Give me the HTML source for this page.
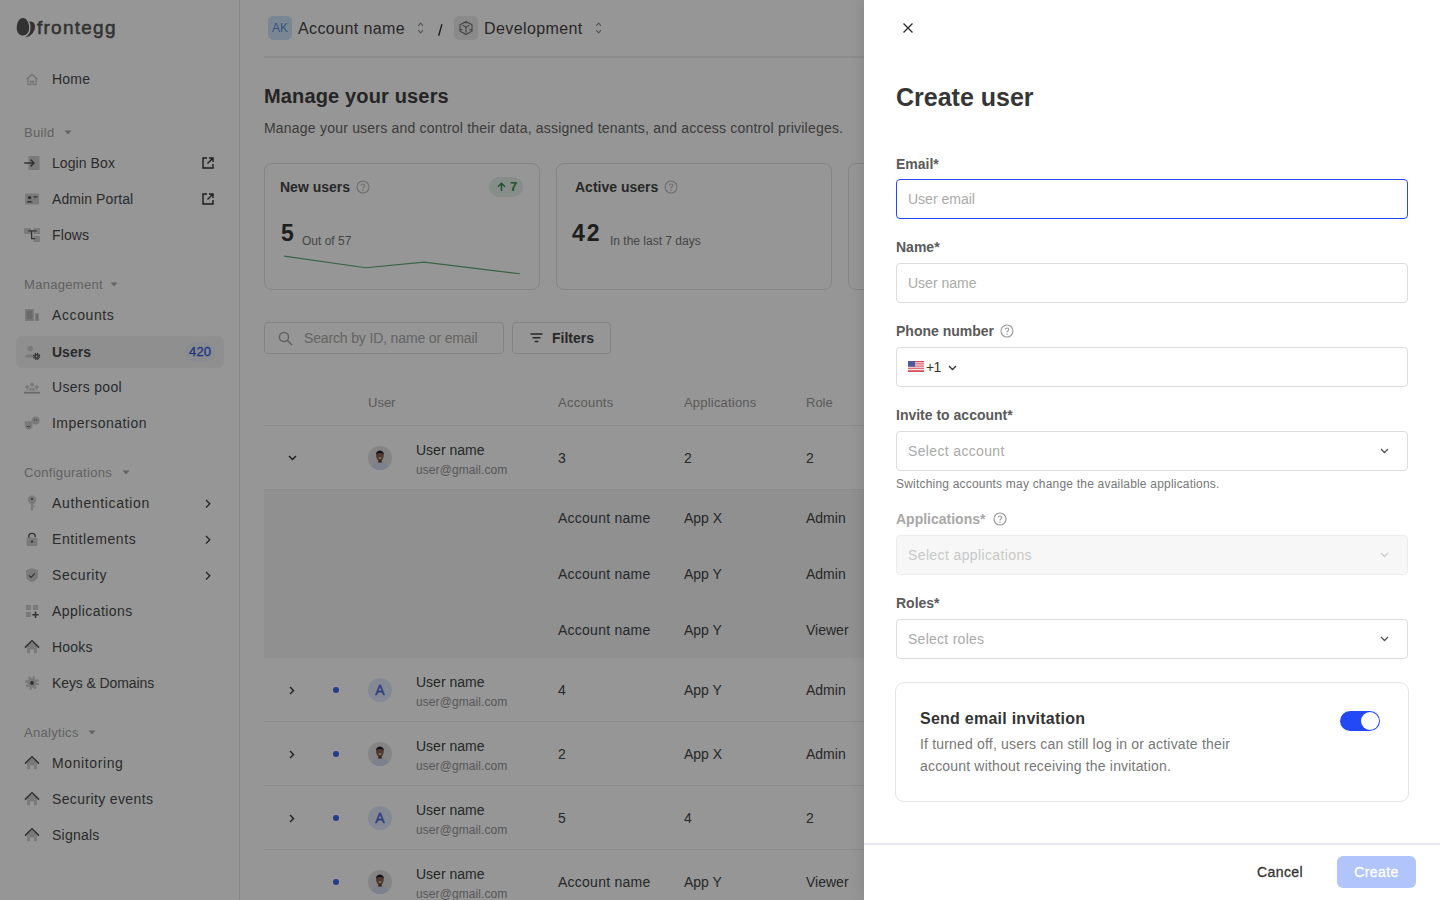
<!DOCTYPE html><html><head><meta charset="utf-8"><title>Create user</title><style>
*{box-sizing:border-box;margin:0;padding:0}
html,body{width:1440px;height:900px;overflow:hidden;background:#fff}
body{font-family:"Liberation Sans",sans-serif;color:#333;position:relative}
.a{position:absolute}
.t{position:absolute;white-space:nowrap;line-height:20px;height:20px}
.b{font-weight:700}
#side{position:absolute;left:0;top:0;width:240px;height:900px;background:#fff;border-right:1px solid #e6e6e6}
#main{position:absolute;left:240px;top:0;width:1200px;height:900px;background:#fff}
#ov{position:absolute;left:0;top:0;width:1440px;height:900px;background:rgba(0,0,0,0.41)}
#drawer{position:absolute;left:864px;top:0;width:576px;height:900px;background:#fff;box-shadow:-3px 0 12px rgba(0,0,0,0.09)}
.nav{color:#4a4a4a;font-size:14px;letter-spacing:0.35px}
.sec{color:#a6a6a6;font-size:13px;letter-spacing:0.3px}
svg{position:absolute;overflow:visible}
.lbl{color:#5a5a5a;font-size:14px;font-weight:700}
.inp{position:absolute;left:32px;width:512px;height:40px;border:1px solid #dcdcdc;border-radius:4px;background:#fff}
.ph{color:#aaa;font-size:14px}
.th{color:#999;font-size:13px}
.td{color:#444;font-size:14px}
</style></head><body>
<div id="side">
<svg style="left:14px;top:16px" width="24" height="24" viewBox="0 0 24 24">
<path d="M8.9 2 C12.6 2 15.1 6.8 15.1 12 C15.1 16.3 12.5 19.5 8.9 19.5 C5.3 19.5 2.7 16.3 2.7 12.2 C2.7 6.8 5.2 2 8.9 2Z" fill="#555"/>
<path d="M15.2 5.6 C18.8 5.2 21.2 7.5 21 11 C20.7 16 17 20.6 11.2 21.4 C14.8 19.2 16.6 15.8 16.6 11.5 C16.6 9 16.1 7.1 15.2 5.6Z" fill="#555"/>
</svg>
<div class="t" style="left:37px;top:17px;font-size:19px;line-height:22px;height:22px;letter-spacing:1.25px;color:#555;-webkit-text-stroke:0.5px #555">frontegg</div>
<svg style="left:24px;top:71px" width="16" height="16" viewBox="0 0 16 16"><path d="M2.6 8.2 L8 3.4 L13.4 8.2 M4 7.2 V13.6 H6.7 V10.3 H9.3 V13.6 H12 V7.2" fill="none" stroke="#c9c9c9" stroke-width="1.5" stroke-linejoin="round"/></svg>
<div class="t nav" style="left:52px;top:69px;letter-spacing:0.23px">Home</div>
<div class="t sec" style="left:24px;top:123px">Build</div>
<svg style="left:64px;top:130px" width="8" height="5" viewBox="0 0 8 5"><path d="M0.5 0.5 H7.5 L4 4.5Z" fill="#a8a8a8"/></svg>
<svg style="left:24px;top:155px" width="16" height="16" viewBox="0 0 16 16"><rect x="4.4" y="1" width="11.2" height="14" rx="1" fill="#d0d0d0"/><path d="M0.2 8 H9.8 M6.6 4.6 L10 8 L6.6 11.4" fill="none" stroke="#555" stroke-width="1.5"/></svg>
<div class="t nav" style="left:52px;top:153px;letter-spacing:0.08px">Login Box</div>
<svg style="left:202px;top:157px" width="12" height="12" viewBox="0 0 12 12"><path d="M5 1 H1 V11 H11 V7 M7 1 H11 V5 M11 1 L5.5 6.5" fill="none" stroke="#333" stroke-width="1.4"/></svg>
<svg style="left:24px;top:191px" width="16" height="16" viewBox="0 0 16 16"><rect x="1" y="2.6" width="14" height="11" rx="1" fill="#d0d0d0"/><circle cx="5.6" cy="6.6" r="1.7" fill="#555"/><path d="M2.4 11.6 C2.6 9.4 8.6 9.4 8.8 11.6Z" fill="#555"/><rect x="9.6" y="5.2" width="3.8" height="1.3" fill="#555"/><rect x="9.6" y="7.4" width="2.6" height="1.1" fill="#c4c4c4"/></svg>
<div class="t nav" style="left:52px;top:189px;letter-spacing:0.09px">Admin Portal</div>
<svg style="left:202px;top:193px" width="12" height="12" viewBox="0 0 12 12"><path d="M5 1 H1 V11 H11 V7 M7 1 H11 V5 M11 1 L5.5 6.5" fill="none" stroke="#333" stroke-width="1.4"/></svg>
<svg style="left:24px;top:227px" width="16" height="16" viewBox="0 0 16 16"><rect x="0" y="1" width="7" height="6" fill="#d0d0d0"/><rect x="9.5" y="1" width="6.5" height="6" fill="#d0d0d0"/><rect x="9.5" y="9" width="6.5" height="6" fill="#d0d0d0"/><path d="M4.2 3.8 H12.6 M7.6 3.8 V11.6 H11" fill="none" stroke="#555" stroke-width="1.3"/></svg>
<div class="t nav" style="left:52px;top:225px;letter-spacing:0.12px">Flows</div>
<div class="t sec" style="left:24px;top:275px">Management</div>
<svg style="left:110px;top:282px" width="8" height="5" viewBox="0 0 8 5"><path d="M0.5 0.5 H7.5 L4 4.5Z" fill="#a8a8a8"/></svg>
<svg style="left:24px;top:307px" width="16" height="16" viewBox="0 0 16 16"><rect x="1" y="2" width="9" height="12" fill="#d0d0d0"/><rect x="2.6" y="3.6" width="5.8" height="8.8" fill="#b4b4b4"/><rect x="11" y="6" width="4" height="8" fill="#d0d0d0"/><rect x="12.2" y="7.6" width="1.6" height="5" fill="#b4b4b4"/></svg>
<div class="t nav" style="left:52px;top:305px;letter-spacing:0.6px">Accounts</div>
<div class="a" style="left:16px;top:336px;width:208px;height:32px;border-radius:6px;background:#f3f3f3"></div>
<svg style="left:24px;top:344px" width="16" height="16" viewBox="0 0 16 16"><circle cx="6.2" cy="4.6" r="2.9" fill="#d0d0d0"/><path d="M0.8 13.6 C0.8 9 11.6 9 11.6 13.6Z" fill="#d0d0d0"/><circle cx="12.6" cy="12.4" r="2.9" fill="none" stroke="#555" stroke-width="1.4" stroke-dasharray="1.4 0.88"/><circle cx="12.6" cy="12.4" r="2.4" fill="#555"/><circle cx="12.6" cy="12.4" r="0.9" fill="#f3f3f3"/></svg>
<div class="t nav b" style="left:52px;top:342px;letter-spacing:0px">Users</div>
<div class="a" style="left:185px;top:342px;width:30px;height:20px;border-radius:10px;background:#eceef8"></div>
<div class="t" style="left:189px;top:342px;font-size:13px;color:#3558e0;letter-spacing:0.2px;-webkit-text-stroke:0.3px #3558e0">420</div>
<svg style="left:24px;top:379px" width="16" height="16" viewBox="0 0 16 16"><circle cx="8" cy="5.6" r="2.1" fill="#d0d0d0"/><path d="M4.6 11.6 C4.6 7.8 11.4 7.8 11.4 11.6Z" fill="#d0d0d0"/><path d="M3.2 6.5 V11.5 M1.2 8.5 L3.2 6.5 L5.2 8.5 M12.8 6.5 V11.5 M10.8 8.5 L12.8 6.5 L14.8 8.5" fill="none" stroke="#d0d0d0" stroke-width="1.2"/><rect x="0" y="12.8" width="16" height="1.8" fill="#b6b6b6"/></svg>
<div class="t nav" style="left:52px;top:377px;letter-spacing:0.3px">Users pool</div>
<svg style="left:24px;top:415px" width="16" height="16" viewBox="0 0 16 16"><path d="M0.8 6.2 H8.4 V10.4 C8.4 13 6.6 14.6 4.6 14.6 C2.6 14.6 0.8 13 0.8 10.4Z" fill="#d0d0d0"/><circle cx="11.6" cy="5.4" r="4" fill="#d0d0d0"/><path d="M10 5 H11.2 M12.2 5 H13.4" stroke="#555" stroke-width="1"/><path d="M2.8 10.8 C3.6 12.2 5.6 12.2 6.4 10.8" stroke="#555" stroke-width="1" fill="none"/></svg>
<div class="t nav" style="left:52px;top:413px;letter-spacing:0.48px">Impersonation</div>
<div class="t sec" style="left:24px;top:463px">Configurations</div>
<svg style="left:122px;top:470px" width="8" height="5" viewBox="0 0 8 5"><path d="M0.5 0.5 H7.5 L4 4.5Z" fill="#a8a8a8"/></svg>
<svg style="left:24px;top:495px" width="16" height="16" viewBox="0 0 16 16"><circle cx="8" cy="4.8" r="4.2" fill="#d0d0d0"/><rect x="6.8" y="7" width="2.4" height="8.4" rx="1" fill="#d0d0d0"/><rect x="8.6" y="10.4" width="2" height="1.6" fill="#d0d0d0"/><circle cx="8" cy="3.9" r="1" fill="#555"/></svg>
<div class="t nav" style="left:52px;top:493px;letter-spacing:0.65px">Authentication</div>
<svg style="left:205px;top:499px" width="6" height="10" viewBox="0 0 6 10"><path d="M1 1 L4.8 4.8 L1 8.6" fill="none" stroke="#3a3a3a" stroke-width="1.3"/></svg>
<svg style="left:24px;top:531px" width="16" height="16" viewBox="0 0 16 16"><path d="M4.9 7 V4.6 C4.9 1.6 11.1 1.6 11.1 4.6 V6" fill="none" stroke="#555" stroke-width="1.4"/><rect x="2.6" y="6.4" width="10.8" height="8.6" rx="1.2" fill="#d0d0d0"/><circle cx="8" cy="10.7" r="1.1" fill="#555"/></svg>
<div class="t nav" style="left:52px;top:529px;letter-spacing:0.61px">Entitlements</div>
<svg style="left:205px;top:535px" width="6" height="10" viewBox="0 0 6 10"><path d="M1 1 L4.8 4.8 L1 8.6" fill="none" stroke="#3a3a3a" stroke-width="1.3"/></svg>
<svg style="left:24px;top:567px" width="16" height="16" viewBox="0 0 16 16"><path d="M8 1 L14 3.2 V8.4 C14 11.8 11.2 14.2 8 15.2 C4.8 14.2 2 11.8 2 8.4 V3.2Z" fill="#d0d0d0"/><path d="M5 8.4 L7 10.4 L11 6.4" fill="none" stroke="#555" stroke-width="1.3"/></svg>
<div class="t nav" style="left:52px;top:565px;letter-spacing:0.56px">Security</div>
<svg style="left:205px;top:571px" width="6" height="10" viewBox="0 0 6 10"><path d="M1 1 L4.8 4.8 L1 8.6" fill="none" stroke="#3a3a3a" stroke-width="1.3"/></svg>
<svg style="left:24px;top:603px" width="16" height="16" viewBox="0 0 16 16"><rect x="2" y="2" width="5" height="5" fill="#d0d0d0"/><rect x="9" y="2" width="5" height="5" fill="#d0d0d0"/><rect x="2" y="9" width="5" height="5" fill="#d0d0d0"/><path d="M11.5 8.6 V15 M8.3 11.8 H14.7" stroke="#555" stroke-width="1.5"/></svg>
<div class="t nav" style="left:52px;top:601px;letter-spacing:0.43px">Applications</div>
<svg style="left:24px;top:639px" width="16" height="16" viewBox="0 0 16 16"><path d="M3.2 7.2 L8 3.2 L12.8 7.2 V14.2 H10 V10.6 H6 V14.2 H3.2Z" fill="#d0d0d0"/><path d="M1 8.6 L8 1.8 L15 8.6" fill="none" stroke="#555" stroke-width="1.6" stroke-linejoin="round"/></svg>
<div class="t nav" style="left:52px;top:637px;letter-spacing:0.18px">Hooks</div>
<svg style="left:24px;top:675px" width="16" height="16" viewBox="0 0 16 16"><circle cx="8" cy="8" r="5.6" fill="none" stroke="#d0d0d0" stroke-width="2.8" stroke-dasharray="2.2 2.2"/><circle cx="8" cy="8" r="5" fill="#d0d0d0"/><circle cx="8" cy="8" r="1.9" fill="#555"/></svg>
<div class="t nav" style="left:52px;top:673px;letter-spacing:-0.1px">Keys &amp; Domains</div>
<div class="t sec" style="left:24px;top:723px">Analytics</div>
<svg style="left:88px;top:730px" width="8" height="5" viewBox="0 0 8 5"><path d="M0.5 0.5 H7.5 L4 4.5Z" fill="#a8a8a8"/></svg>
<svg style="left:24px;top:755px" width="16" height="16" viewBox="0 0 16 16"><path d="M3.2 7.2 L8 3.2 L12.8 7.2 V14.2 H10 V10.6 H6 V14.2 H3.2Z" fill="#d0d0d0"/><path d="M1 8.6 L8 1.8 L15 8.6" fill="none" stroke="#555" stroke-width="1.6" stroke-linejoin="round"/></svg>
<div class="t nav" style="left:52px;top:753px;letter-spacing:0.61px">Monitoring</div>
<svg style="left:24px;top:791px" width="16" height="16" viewBox="0 0 16 16"><path d="M3.2 7.2 L8 3.2 L12.8 7.2 V14.2 H10 V10.6 H6 V14.2 H3.2Z" fill="#d0d0d0"/><path d="M1 8.6 L8 1.8 L15 8.6" fill="none" stroke="#555" stroke-width="1.6" stroke-linejoin="round"/></svg>
<div class="t nav" style="left:52px;top:789px;letter-spacing:0.37px">Security events</div>
<svg style="left:24px;top:827px" width="16" height="16" viewBox="0 0 16 16"><path d="M3.2 7.2 L8 3.2 L12.8 7.2 V14.2 H10 V10.6 H6 V14.2 H3.2Z" fill="#d0d0d0"/><path d="M1 8.6 L8 1.8 L15 8.6" fill="none" stroke="#555" stroke-width="1.6" stroke-linejoin="round"/></svg>
<div class="t nav" style="left:52px;top:825px;letter-spacing:0.24px">Signals</div>
</div>
<div id="main">
<div class="a" style="left:28px;top:16px;width:24px;height:24px;border-radius:5px;background:#d2e4fb"></div>
<div class="t" style="left:28px;top:18px;width:24px;text-align:center;font-size:12px;color:#5a8fd8">AK</div>
<div class="t" style="left:58px;top:19px;font-size:16px;color:#454545;letter-spacing:0.4px">Account name</div>
<svg style="left:177px;top:22px" width="7" height="12" viewBox="0 0 7 12"><path d="M1.2 3.8 L3.6 1.2 L6 3.8 M1.2 8.2 L3.6 10.8 L6 8.2" fill="none" stroke="#8f8f8f" stroke-width="1.15"/></svg>
<svg style="left:196px;top:22px" width="8" height="16" viewBox="0 0 8 16"><path d="M2.8 13.2 L5.8 2.6" stroke="#333" stroke-width="1.4" stroke-linecap="round"/></svg>
<div class="a" style="left:214px;top:16px;width:24px;height:24px;border-radius:5px;background:#eaeaea"></div>
<svg style="left:218px;top:20px" width="16" height="16" viewBox="0 0 16 16"><path d="M8 1.6 L14 4.8 V11.2 L8 14.4 L2 11.2 V4.8Z M4.6 5.2 L8 7.2 L11.4 5.2 M8 7.2 V12.6 M8 1.6 V3.4 M2.4 9.6 L4.6 9.6 M13.6 9.6 L11.4 9.6" fill="none" stroke="#7a7a7a" stroke-width="1.2" stroke-linejoin="round"/></svg>
<div class="t" style="left:244px;top:19px;font-size:16px;color:#454545;letter-spacing:0.4px">Development</div>
<svg style="left:355px;top:22px" width="7" height="12" viewBox="0 0 7 12"><path d="M1.2 3.8 L3.6 1.2 L6 3.8 M1.2 8.2 L3.6 10.8 L6 8.2" fill="none" stroke="#8f8f8f" stroke-width="1.15"/></svg>
<div class="a" style="left:24px;top:56px;width:1176px;height:2px;background:#efefef"></div>
<div class="t b" style="left:24px;top:84px;font-size:20px;line-height:24px;height:24px;color:#404040;letter-spacing:0.15px">Manage your users</div>
<div class="t" style="left:24px;top:118px;font-size:14px;color:#666;letter-spacing:0.21px">Manage your users and control their data, assigned tenants, and access control privileges.</div>
<div class="a" style="left:24px;top:163px;width:276px;height:127px;border:1px solid #e2e2e2;border-radius:8px"></div>
<div class="t b" style="left:40px;top:177px;font-size:14px;color:#454545">New users</div>
<svg style="left:116px;top:180px" width="14" height="14" viewBox="0 0 14 14"><circle cx="7" cy="7" r="6" fill="none" stroke="#bdbdbd" stroke-width="1.1"/><path d="M5.2 5.4 C5.2 3.5 8.8 3.5 8.8 5.4 C8.8 6.8 7 6.8 7 8.4" fill="none" stroke="#bdbdbd" stroke-width="1.1"/><circle cx="7" cy="10.3" r="0.7" fill="#bdbdbd"/></svg>
<div class="t b" style="left:41px;top:220px;font-size:23px;line-height:26px;height:26px;color:#333;">5</div>
<div class="t" style="left:62px;top:231px;font-size:12px;color:#777">Out of 57</div>
<div class="a" style="left:316px;top:163px;width:276px;height:127px;border:1px solid #e2e2e2;border-radius:8px"></div>
<div class="t b" style="left:335px;top:177px;font-size:14px;color:#454545">Active users</div>
<svg style="left:424px;top:180px" width="14" height="14" viewBox="0 0 14 14"><circle cx="7" cy="7" r="6" fill="none" stroke="#bdbdbd" stroke-width="1.1"/><path d="M5.2 5.4 C5.2 3.5 8.8 3.5 8.8 5.4 C8.8 6.8 7 6.8 7 8.4" fill="none" stroke="#bdbdbd" stroke-width="1.1"/><circle cx="7" cy="10.3" r="0.7" fill="#bdbdbd"/></svg>
<div class="t b" style="left:332px;top:220px;font-size:23px;line-height:26px;height:26px;color:#333;letter-spacing:2px;">42</div>
<div class="t" style="left:370px;top:231px;font-size:12px;color:#777">In the last 7 days</div>
<div class="a" style="left:608px;top:163px;width:276px;height:127px;border:1px solid #e2e2e2;border-radius:8px"></div>
<div class="a" style="left:249px;top:177px;width:34px;height:20px;border-radius:10px;background:#e6f0e8"></div>
<svg style="left:257px;top:182px" width="9" height="10" viewBox="0 0 9 10"><path d="M4.5 9 V1.5 M1 4.8 L4.5 1.3 L8 4.8" fill="none" stroke="#3d8a55" stroke-width="1.5"/></svg>
<div class="t b" style="left:270px;top:177px;font-size:13px;color:#3d8a55">7</div>
<svg style="left:0;top:0" width="400" height="300"><polyline points="44.2,256.1 125.7,267.7 184.1,262.1 279.8,273.8" fill="none" stroke="#62a876" stroke-width="1.1"/></svg>
<div class="a" style="left:24px;top:322px;width:240px;height:32px;border:1px solid #e0e0e0;border-radius:4px"></div>
<svg style="left:38px;top:331px" width="15" height="15" viewBox="0 0 15 15"><circle cx="6" cy="6" r="4.6" fill="none" stroke="#a6a6a6" stroke-width="1.5"/><path d="M9.5 9.5 L14 14" stroke="#a6a6a6" stroke-width="1.6"/></svg>
<div class="t" style="left:64px;top:328px;font-size:14px;color:#aaa;letter-spacing:-0.15px">Search by ID, name or email</div>
<div class="a" style="left:272px;top:322px;width:99px;height:32px;border:1px solid #e0e0e0;border-radius:4px"></div>
<svg style="left:290px;top:333px" width="13" height="10" viewBox="0 0 13 10"><path d="M0.5 1 H12.5 M2.5 4.8 H10.5 M4.7 8.6 H8.3" stroke="#444" stroke-width="1.5"/></svg>
<div class="t b" style="left:312px;top:328px;font-size:14px;color:#454545">Filters</div>
<div class="t th" style="left:128px;top:393px">User</div>
<div class="t th" style="left:318px;top:393px;letter-spacing:0.25px">Accounts</div>
<div class="t th" style="left:444px;top:393px;letter-spacing:0.2px">Applications</div>
<div class="t th" style="left:566px;top:393px">Role</div>
<div class="a" style="left:24px;top:425px;width:1176px;height:1px;background:#ededed"></div>
<svg style="left:48px;top:455px" width="9" height="6" viewBox="0 0 9 6"><path d="M1 1 L4.5 4.5 L8 1" fill="none" stroke="#333" stroke-width="1.4"/></svg>
<svg style="left:128px;top:446px" width="24" height="24" viewBox="0 0 24 24"><defs><clipPath id="c458"><circle cx="12" cy="12" r="12"/></clipPath></defs><g clip-path="url(#c458)"><rect width="24" height="24" fill="#e2e2e2"/><path d="M2.5 24 C3 18.5 7 15.3 12 15.3 C17 15.3 21 18.5 21.5 24Z" fill="#d2deec"/><rect x="10.2" y="12.5" width="3.6" height="4" fill="#5e3f2c"/><ellipse cx="11.9" cy="9.6" rx="3.8" ry="5.1" fill="#86604a"/><path d="M7.9 8.6 C7.6 3.6 16.2 3.4 15.9 8.6 C15.2 6.4 8.7 6.4 7.9 8.6Z" fill="#1e1e1e"/><ellipse cx="11.9" cy="12" rx="1.6" ry="0.8" fill="#e8e0da"/></g></svg>
<div class="t td" style="left:176px;top:440px">User name</div><div class="t" style="left:176px;top:460px;font-size:12px;color:#959595;letter-spacing:0.08px">user@gmail.com</div>
<div class="t td" style="left:318px;top:448px">3</div>
<div class="t td" style="left:444px;top:448px">2</div>
<div class="t td" style="left:566px;top:448px">2</div>
<div class="a" style="left:24px;top:489px;width:1176px;height:1px;background:#ededed"></div>
<div class="a" style="left:24px;top:490px;width:1176px;height:168px;background:#f5f5f5"></div>
<div class="t td" style="left:318px;top:508px;letter-spacing:0.25px">Account name</div>
<div class="t td" style="left:444px;top:508px">App X</div>
<div class="t td" style="left:566px;top:508px">Admin</div>
<div class="t td" style="left:318px;top:564px;letter-spacing:0.25px">Account name</div>
<div class="t td" style="left:444px;top:564px">App Y</div>
<div class="t td" style="left:566px;top:564px">Admin</div>
<div class="t td" style="left:318px;top:620px;letter-spacing:0.25px">Account name</div>
<div class="t td" style="left:444px;top:620px">App Y</div>
<div class="t td" style="left:566px;top:620px">Viewer</div>
<div class="a" style="left:24px;top:721px;width:1176px;height:1px;background:#ededed"></div>
<svg style="left:49px;top:685.5px" width="6" height="9" viewBox="0 0 6 9"><path d="M1 1 L4.5 4.5 L1 8" fill="none" stroke="#333" stroke-width="1.4"/></svg>
<div class="a" style="left:93px;top:687px;width:6px;height:6px;border-radius:3px;background:#4565f0"></div>
<div class="a" style="left:128px;top:678px;width:24px;height:24px;border-radius:12px;background:#e1e9fa"></div><div class="t" style="left:128px;top:680px;width:24px;text-align:center;font-size:14px;color:#4a6ad8;-webkit-text-stroke:0.4px #4a6ad8">A</div>
<div class="t td" style="left:176px;top:672px">User name</div><div class="t" style="left:176px;top:692px;font-size:12px;color:#959595;letter-spacing:0.08px">user@gmail.com</div>
<div class="t td" style="left:318px;top:680px;">4</div>
<div class="t td" style="left:444px;top:680px">App Y</div>
<div class="t td" style="left:566px;top:680px">Admin</div>
<div class="a" style="left:24px;top:785px;width:1176px;height:1px;background:#ededed"></div>
<svg style="left:49px;top:749.5px" width="6" height="9" viewBox="0 0 6 9"><path d="M1 1 L4.5 4.5 L1 8" fill="none" stroke="#333" stroke-width="1.4"/></svg>
<div class="a" style="left:93px;top:751px;width:6px;height:6px;border-radius:3px;background:#4565f0"></div>
<svg style="left:128px;top:742px" width="24" height="24" viewBox="0 0 24 24"><defs><clipPath id="c754"><circle cx="12" cy="12" r="12"/></clipPath></defs><g clip-path="url(#c754)"><rect width="24" height="24" fill="#e2e2e2"/><path d="M2.5 24 C3 18.5 7 15.3 12 15.3 C17 15.3 21 18.5 21.5 24Z" fill="#d2deec"/><rect x="10.2" y="12.5" width="3.6" height="4" fill="#5e3f2c"/><ellipse cx="11.9" cy="9.6" rx="3.8" ry="5.1" fill="#86604a"/><path d="M7.9 8.6 C7.6 3.6 16.2 3.4 15.9 8.6 C15.2 6.4 8.7 6.4 7.9 8.6Z" fill="#1e1e1e"/><ellipse cx="11.9" cy="12" rx="1.6" ry="0.8" fill="#e8e0da"/></g></svg>
<div class="t td" style="left:176px;top:736px">User name</div><div class="t" style="left:176px;top:756px;font-size:12px;color:#959595;letter-spacing:0.08px">user@gmail.com</div>
<div class="t td" style="left:318px;top:744px;">2</div>
<div class="t td" style="left:444px;top:744px">App X</div>
<div class="t td" style="left:566px;top:744px">Admin</div>
<div class="a" style="left:24px;top:849px;width:1176px;height:1px;background:#ededed"></div>
<svg style="left:49px;top:813.5px" width="6" height="9" viewBox="0 0 6 9"><path d="M1 1 L4.5 4.5 L1 8" fill="none" stroke="#333" stroke-width="1.4"/></svg>
<div class="a" style="left:93px;top:815px;width:6px;height:6px;border-radius:3px;background:#4565f0"></div>
<div class="a" style="left:128px;top:806px;width:24px;height:24px;border-radius:12px;background:#e1e9fa"></div><div class="t" style="left:128px;top:808px;width:24px;text-align:center;font-size:14px;color:#4a6ad8;-webkit-text-stroke:0.4px #4a6ad8">A</div>
<div class="t td" style="left:176px;top:800px">User name</div><div class="t" style="left:176px;top:820px;font-size:12px;color:#959595;letter-spacing:0.08px">user@gmail.com</div>
<div class="t td" style="left:318px;top:808px;">5</div>
<div class="t td" style="left:444px;top:808px">4</div>
<div class="t td" style="left:566px;top:808px">2</div>
<div class="a" style="left:24px;top:913px;width:1176px;height:1px;background:#ededed"></div>
<div class="a" style="left:93px;top:879px;width:6px;height:6px;border-radius:3px;background:#4565f0"></div>
<svg style="left:128px;top:870px" width="24" height="24" viewBox="0 0 24 24"><defs><clipPath id="c882"><circle cx="12" cy="12" r="12"/></clipPath></defs><g clip-path="url(#c882)"><rect width="24" height="24" fill="#e2e2e2"/><path d="M2.5 24 C3 18.5 7 15.3 12 15.3 C17 15.3 21 18.5 21.5 24Z" fill="#d2deec"/><rect x="10.2" y="12.5" width="3.6" height="4" fill="#5e3f2c"/><ellipse cx="11.9" cy="9.6" rx="3.8" ry="5.1" fill="#86604a"/><path d="M7.9 8.6 C7.6 3.6 16.2 3.4 15.9 8.6 C15.2 6.4 8.7 6.4 7.9 8.6Z" fill="#1e1e1e"/><ellipse cx="11.9" cy="12" rx="1.6" ry="0.8" fill="#e8e0da"/></g></svg>
<div class="t td" style="left:176px;top:864px">User name</div><div class="t" style="left:176px;top:884px;font-size:12px;color:#959595;letter-spacing:0.08px">user@gmail.com</div>
<div class="t td" style="left:318px;top:872px;letter-spacing:0.25px;">Account name</div>
<div class="t td" style="left:444px;top:872px">App Y</div>
<div class="t td" style="left:566px;top:872px">Viewer</div>
</div>
<div id="ov"></div>
<div id="drawer">
<svg style="left:39px;top:23px" width="10" height="10" viewBox="0 0 10 10"><path d="M0.5 0.5 L9.5 9.5 M9.5 0.5 L0.5 9.5" stroke="#2f2f2f" stroke-width="1.4"/></svg>
<div class="t b" style="left:32px;top:83px;font-size:25px;line-height:28px;height:28px;color:#363636">Create user</div>
<div class="t lbl" style="left:32px;top:154px">Email*</div>
<div class="inp" style="top:179px;border:1.5px solid #2249f5;border-radius:4px"></div>
<div class="t ph" style="left:44px;top:189px">User email</div>
<div class="t lbl" style="left:32px;top:237px">Name*</div>
<div class="inp" style="top:263px"></div>
<div class="t ph" style="left:44px;top:273px">User name</div>
<div class="t lbl" style="left:32px;top:321px">Phone number</div>
<svg style="left:136px;top:324px" width="14" height="14" viewBox="0 0 14 14"><circle cx="7" cy="7" r="6" fill="none" stroke="#9a9a9a" stroke-width="1.1"/><path d="M5.2 5.4 C5.2 3.5 8.8 3.5 8.8 5.4 C8.8 6.8 7 6.8 7 8.4" fill="none" stroke="#9a9a9a" stroke-width="1.1"/><circle cx="7" cy="10.3" r="0.7" fill="#9a9a9a"/></svg>
<div class="inp" style="top:347px"></div>
<svg style="left:44px;top:361px" width="16" height="11" viewBox="0 0 16 11"><rect width="16" height="11" rx="1" fill="#f3e3e5"/><g fill="#d9535e"><rect y="0" width="16" height="1.3"/><rect y="2.4" width="16" height="1"/><rect y="4.6" width="16" height="1"/><rect y="6.8" width="16" height="1"/><rect y="9.2" width="16" height="1.8"/></g><rect width="7" height="5.6" fill="#4a5a9c"/></svg>
<div class="t" style="left:62px;top:357px;font-size:14px;color:#333;letter-spacing:-0.6px">+1</div>
<svg style="left:84px;top:365px" width="9" height="6" viewBox="0 0 9 6"><path d="M1 1 L4.5 4.5 L8 1" fill="none" stroke="#333" stroke-width="1.4"/></svg>
<div class="t lbl" style="left:32px;top:405px">Invite to account*</div>
<div class="inp" style="top:431px"></div>
<div class="t ph" style="left:44px;top:441px;letter-spacing:0.35px">Select account</div>
<svg style="left:516px;top:448px" width="9" height="6" viewBox="0 0 9 6"><path d="M1 1 L4.5 4.5 L8 1" fill="none" stroke="#555" stroke-width="1.3"/></svg>
<div class="t" style="left:32px;top:474px;font-size:12px;color:#777;letter-spacing:0.2px">Switching accounts may change the available applications.</div>
<div class="t lbl" style="left:32px;top:509px;color:#a8a8a8">Applications*</div>
<svg style="left:129px;top:512px" width="14" height="14" viewBox="0 0 14 14"><circle cx="7" cy="7" r="6" fill="none" stroke="#9a9a9a" stroke-width="1.1"/><path d="M5.2 5.4 C5.2 3.5 8.8 3.5 8.8 5.4 C8.8 6.8 7 6.8 7 8.4" fill="none" stroke="#9a9a9a" stroke-width="1.1"/><circle cx="7" cy="10.3" r="0.7" fill="#9a9a9a"/></svg>
<div class="inp" style="top:535px;background:#f7f7f7;border-color:#ececec"></div>
<div class="t ph" style="left:44px;top:545px;color:#c8c8c8;letter-spacing:0.38px">Select applications</div>
<svg style="left:516px;top:552px" width="9" height="6" viewBox="0 0 9 6"><path d="M1 1 L4.5 4.5 L8 1" fill="none" stroke="#ccc" stroke-width="1.3"/></svg>
<div class="t lbl" style="left:32px;top:593px">Roles*</div>
<div class="inp" style="top:619px"></div>
<div class="t ph" style="left:44px;top:629px;letter-spacing:0.27px">Select roles</div>
<svg style="left:516px;top:636px" width="9" height="6" viewBox="0 0 9 6"><path d="M1 1 L4.5 4.5 L8 1" fill="none" stroke="#555" stroke-width="1.3"/></svg>
<div class="a" style="left:31px;top:682px;width:514px;height:120px;border:1px solid #e4e4e4;border-radius:9px"></div>
<div class="t b" style="left:56px;top:709px;font-size:16px;color:#333;letter-spacing:0.25px">Send email invitation</div>
<div class="a" style="left:56px;top:733px;width:340px;font-size:14px;line-height:22px;color:#777;letter-spacing:0.18px">If turned off, users can still log in or activate their<br>account without receiving the invitation.</div>
<div class="a" style="left:476px;top:711px;width:40px;height:20px;border-radius:10px;background:#2249f5"></div>
<div class="a" style="left:497px;top:712px;width:18px;height:18px;border-radius:9px;background:#fff"></div>
<div class="a" style="left:0;top:843px;width:576px;height:2px;background:#e8e8ee"></div>
<div class="t" style="left:393px;top:862px;font-size:14px;color:#333;letter-spacing:0.4px;-webkit-text-stroke:0.3px #333">Cancel</div>
<div class="a" style="left:473px;top:856px;width:79px;height:32px;border-radius:6px;background:#b1c5fc"></div>
<div class="t" style="left:473px;top:862px;width:79px;text-align:center;font-size:14px;color:#fff;letter-spacing:0.4px;-webkit-text-stroke:0.3px #fff">Create</div>
</div>
</body></html>
